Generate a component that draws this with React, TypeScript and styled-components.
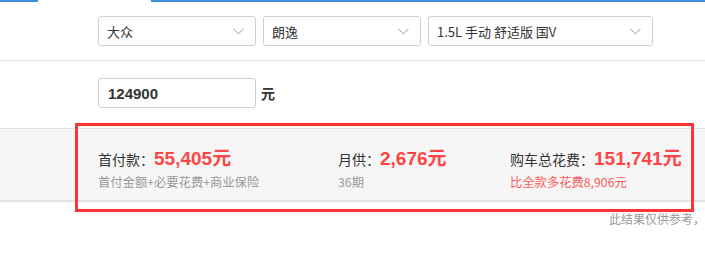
import React from "react";
import styled, { createGlobalStyle } from "styled-components";

const Global = createGlobalStyle`
  html, body { margin: 0; padding: 0; background: #fff; overflow: hidden; }
  body { font-family: "Noto Sans CJK SC", "Microsoft YaHei", sans-serif; color: #333; }
`;

const Page = styled.div`
  position: relative;
  width: 705px;
  height: 257px;
`;

const TabLine = styled.div`
  display: flex;
  height: 2px;
`;

const TabSeg = styled.div<{ $w?: number; $active?: boolean }>`
  ${(p) => (p.$w ? `width: ${p.$w}px;` : "flex: 1;")}
  background: ${(p) => (p.$active ? "#fff" : "#3d8ee0")};
`;

const SelectRow = styled.div`
  display: flex;
  gap: 7px;
  padding: 14px 0 14px 98px;
  border-bottom: 1px solid #e2e2e2;
`;

const Select = styled.div<{ $w: number }>`
  box-sizing: border-box;
  width: ${(p) => p.$w}px;
  height: 30px;
  border: 1px solid #d0d0d0;
  border-radius: 3px;
  display: flex;
  align-items: center;
  justify-content: space-between;
  padding: 0 11px 0 8px;
  font-size: 13px;
  color: #333;
`;

const Chevron = () => (
  <svg width="11" height="7" viewBox="0 0 11 7">
    <path d="M0.5 0.8 L5.5 5.8 L10.5 0.8" fill="none" stroke="#b8b8b8" strokeWidth="1.1" />
  </svg>
);

const InputRow = styled.div`
  display: flex;
  align-items: center;
  gap: 5px;
  padding: 17px 0 20px 98px;
`;

const PriceInput = styled.div`
  box-sizing: border-box;
  width: 158px;
  height: 30px;
  border: 1px solid #cfcfcf;
  border-radius: 3px;
  display: flex;
  align-items: center;
  padding-left: 9px;
  font-family: "Liberation Sans", "Noto Sans CJK SC", sans-serif;
  font-weight: bold;
  font-size: 15px;
  color: #333;
`;

const Unit = styled.span`
  font-size: 14px;
  font-weight: bold;
  color: #333;
`;

const Band = styled.div`
  box-sizing: border-box;
  display: flex;
  align-items: flex-start;
  padding: 14px 0 0 98px;
  height: 74px;
  background: #f6f6f6;
  border-top: 1px solid #e2e2e2;
  border-bottom: 2px solid #e2e2e2;
`;

const Col = styled.div<{ $w?: number }>`
  ${(p) => (p.$w ? `width: ${p.$w}px;` : "")}
  display: flex;
  flex-direction: column;
  gap: 4px;
`;

const Title = styled.div`
  display: flex;
  align-items: baseline;
  font-size: 14px;
  color: #333;
  white-space: nowrap;
  height: 26px;
`;

const Amount = styled.span`
  font-family: "Liberation Sans", "Noto Sans CJK SC", sans-serif;
  font-weight: bold;
  font-size: 19px;
  color: #ff4545;
  & > span {
    font-family: "Noto Sans CJK SC", sans-serif;
  }
`;

const Sub = styled.div<{ $red?: boolean }>`
  font-size: 12.3px;
  color: ${(p) => (p.$red ? "#ff5a5a" : "#999")};
  white-space: nowrap;
`;

const Note = styled.div`
  text-align: right;
  font-size: 12px;
  color: #999;
  padding-top: 8px;
  white-space: nowrap;
`;

const Highlight = styled.div`
  position: absolute;
  left: 75px;
  top: 123px;
  width: 619px;
  height: 89px;
  box-sizing: border-box;
  border: 3px solid #ff3333;
  pointer-events: none;
`;

export default function App() {
  return (
    <Page>
      <Global />
      <TabLine>
        <TabSeg $w={38} />
        <TabSeg $w={113} $active />
        <TabSeg />
      </TabLine>
      <SelectRow>
        <Select $w={158}>
          大众
          <Chevron />
        </Select>
        <Select $w={158}>
          朗逸
          <Chevron />
        </Select>
        <Select $w={225}>
          1.5L 手动 舒适版 国V
          <Chevron />
        </Select>
      </SelectRow>
      <InputRow>
        <PriceInput>124900</PriceInput>
        <Unit>元</Unit>
      </InputRow>
      <Band>
        <Col $w={240}>
          <Title>
            首付款：<Amount>55,405<span>元</span></Amount>
          </Title>
          <Sub>首付金额+必要花费+商业保险</Sub>
        </Col>
        <Col $w={172}>
          <Title>
            月供：<Amount>2,676<span>元</span></Amount>
          </Title>
          <Sub>36期</Sub>
        </Col>
        <Col>
          <Title>
            购车总花费：<Amount>151,741<span>元</span></Amount>
          </Title>
          <Sub $red>比全款多花费8,906元</Sub>
        </Col>
      </Band>
      <Note>此结果仅供参考，</Note>
      <Highlight />
    </Page>
  );
}
